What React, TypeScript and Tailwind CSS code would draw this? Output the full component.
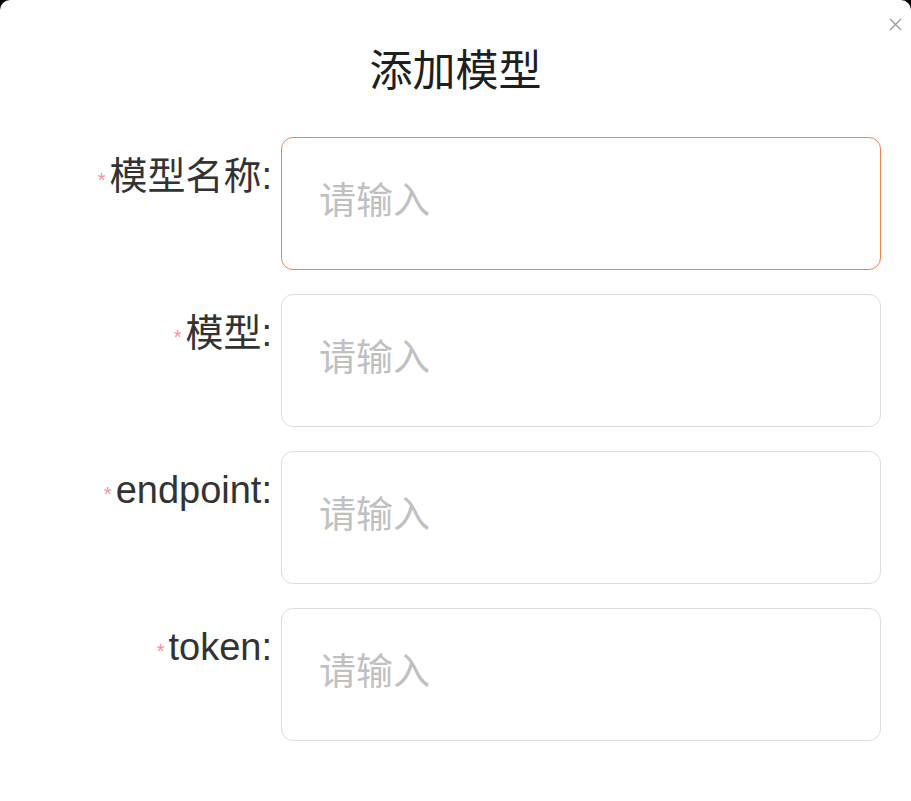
import React from "react";

const fields = [
  { label: "模型名称", focused: true },
  { label: "模型", focused: false },
  { label: "endpoint", focused: false },
  { label: "token", focused: false },
];

function App() {
  return (
    <div className="min-h-screen bg-black font-['Liberation_Sans','Noto_Sans_CJK_SC',sans-serif]">
      <div className="relative h-[801px] rounded-t-[10px] bg-white">
        <button className="absolute right-[9px] top-[18px] p-0 text-[#999]">
          <svg width="13" height="13" viewBox="0 0 13 13" fill="none" stroke="currentColor" strokeWidth="1.3">
            <path d="M1 1L12 12M12 1L1 12" />
          </svg>
        </button>

        <h1 className="pt-[44px] text-center text-[43px] leading-[54px] text-[#1f1f1f]">添加模型</h1>

        <div className="mt-[39px] flex flex-col gap-[24px]">
          {fields.map((f) => (
            <div key={f.label} className="flex">
              <label className="flex h-[62px] w-[281px] shrink-0 items-center justify-end pr-[9px] pt-[16px] text-[38px] leading-[44px] text-[#333]">
                <span className="mr-[4px] translate-y-[4px] text-[20px] leading-none text-[#f79494]">*</span>
                <span>{f.label}:</span>
              </label>
              <input
                placeholder="请输入"
                className={
                  f.focused
                    ? "h-[133px] w-[600px] rounded-[12px] border border-[#f0824e] pb-[4px] pl-[37px] pr-[37px] text-[37px] text-[#333] outline-none placeholder:text-[#c0c0c0]"
                    : "h-[133px] w-[600px] rounded-[12px] border border-[#dcdcdc] pb-[4px] pl-[37px] pr-[37px] text-[37px] text-[#333] outline-none placeholder:text-[#c0c0c0]"
                }
              />
            </div>
          ))}
        </div>
      </div>
    </div>
  );
}

export default App;
